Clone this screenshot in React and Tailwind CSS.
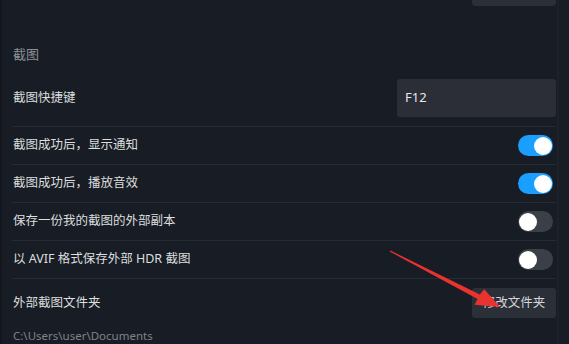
import React from "react";

function Toggle({ on }) {
  return (
    <div
      className={`relative w-[35px] h-[21px] rounded-full mr-[3px] ${on ? "bg-[#1a9fff]" : "bg-[#3a3f48]"}`}
    >
      <div
        className={`absolute top-[1.5px] w-[18px] h-[18px] rounded-full bg-white ${on ? "right-[1px]" : "left-[1px]"}`}
      />
    </div>
  );
}

function Row({ label, on }) {
  return (
    <div className="h-[38px] flex items-center justify-between border-b border-[#262c34] pl-[1px]">
      <span className="text-[12.5px] text-[#dcdedf]">{label}</span>
      <Toggle on={on} />
    </div>
  );
}

export default function App() {
  return (
    <div
      className="relative w-[569px] h-[344px] overflow-hidden bg-[#181d25] border-l-[2px] border-[#13171d]"
      style={{ fontFamily: "'Noto Sans', 'Noto Sans CJK SC', sans-serif" }}
    >
      <div className="absolute top-0 bottom-0 left-[555px] w-[2px] bg-[#1c222a]" />
      <div className="pl-[10px] pr-[13px]">
        <div className="h-[6px] flex justify-end">
          <div className="w-[84px] h-[6px] bg-[#2a2f38] rounded-b-sm" />
        </div>
        <div className="mt-[38px] h-[20px] leading-[20px] text-[13px] text-[#8b9098] pl-[1px]">截图</div>
        <div className="mt-[15px] h-[48px] pb-[9px] border-b border-[#262c34] flex items-center justify-between pl-[1px]">
          <span className="text-[12.5px] text-[#dcdedf]">截图快捷键</span>
          <div className="w-[159px] h-[38px] bg-[#2b2e37] rounded-[3px] flex items-center pl-[8px] text-[13px] text-[#e6e7e8]">
            F12
          </div>
        </div>
        <Row label="截图成功后，显示通知" on />
        <Row label="截图成功后，播放音效" on />
        <Row label="保存一份我的截图的外部副本" on={false} />
        <Row label="以 AVIF 格式保存外部 HDR 截图" on={false} />
        <div className="mt-[9px] h-[30px] flex items-center justify-between pl-[1px]">
          <span className="text-[12.5px] text-[#dcdedf]">外部截图文件夹</span>
          <div className="w-[84px] h-[30px] bg-[#2b2f38] rounded-[3px] flex items-center justify-center text-[12.5px] text-[#d4d6d9]">
            修改文件夹
          </div>
        </div>
        <div className="mt-[10px] pl-[1px] text-[11.5px] leading-[16px] text-[#7d838b]">C:\Users\user\Documents</div>
      </div>
      <svg className="absolute left-0 top-0" width="569" height="344" viewBox="0 0 569 344">
        <polygon
          points="388.3,250.5 387.7,251.5 475.6,299 472.6,304.8 498,307 482.3,289.3 477.9,294.6"
          fill="#e8332f"
        />
      </svg>
    </div>
  );
}
